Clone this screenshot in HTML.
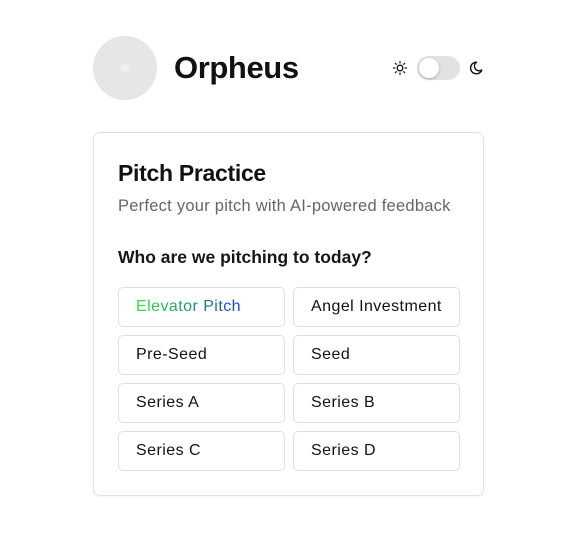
<!DOCTYPE html>
<html><head><meta charset="utf-8"><style>
*{box-sizing:border-box;margin:0;padding:0}
body{width:571px;height:552px;background:#fff;font-family:"Liberation Sans",sans-serif;color:#111;position:relative;overflow:hidden}
.av{position:absolute;left:93px;top:36px;width:64px;height:64px;border-radius:50%;background:#e6e6e6}
.av:after{content:"";position:absolute;left:30px;top:30px;width:4px;height:4px;border-radius:50%;background:#f4f4f4;box-shadow:0 0 0 3px #ededed}
.t{position:absolute;left:174px;top:48px;font-size:31px;font-weight:bold;letter-spacing:-0.4px;line-height:40px}
.tg{position:absolute;left:417px;top:56px;width:43px;height:24px;border-radius:12px;background:#e2e2e4}
.tg:after{content:"";position:absolute;left:2px;top:2px;width:20px;height:20px;border-radius:50%;background:#fff;box-shadow:0 1px 3px rgba(0,0,0,.25)}
.card{position:absolute;left:93px;top:132px;width:391px;height:364px;border:1px solid #e2e2e2;border-radius:7px;box-shadow:0 1px 2px rgba(0,0,0,.05)}
h1{position:absolute;left:118px;top:158px;font-size:23px;font-weight:bold;letter-spacing:-0.3px;line-height:30px}
.sub{position:absolute;left:118px;top:196px;font-size:16.5px;letter-spacing:0.25px;color:#666;line-height:20px}
.q{position:absolute;left:118px;top:246px;font-size:17.5px;font-weight:600;line-height:22px;color:#161616}
.b{position:absolute;width:167px;height:40px;border:1px solid #e0e0e0;border-radius:5px;font-size:16px;letter-spacing:0.45px;line-height:38px;padding-left:17px;color:#111}
.g{background:linear-gradient(90deg,#2ee640,#16a070 45%,#1a3ae8);-webkit-background-clip:text;background-clip:text;color:transparent}
</style></head><body>
<div class="av"></div>
<div class="t">Orpheus</div>
<svg style="position:absolute;left:392px;top:60px" width="16" height="16" viewBox="0 0 16 16" fill="none" stroke="#111" stroke-width="1.3" stroke-linecap="round"><circle cx="8" cy="8" r="2.8"/><path d="M8 1.5v1.3M8 13.2v1.3M1.5 8h1.3M13.2 8h1.3M3.4 3.4l.9.9M11.7 11.7l.9.9M3.4 12.6l.9-.9M11.7 4.3l.9-.9"/></svg>
<div class="tg"></div>
<svg style="position:absolute;left:468px;top:60px" width="16" height="16" viewBox="0 0 16 16" fill="none" stroke="#111" stroke-width="1.4" stroke-linejoin="round"><path d="M8.5 2.2A5.8 5.8 0 1 0 13.8 10 4.6 4.6 0 0 1 8.5 2.2z"/></svg>
<div class="card"></div>
<h1>Pitch Practice</h1>
<div class="sub">Perfect your pitch with AI-powered feedback</div>
<div class="q">Who are we pitching to today?</div>
<div class="b" style="left:118px;top:287px"><span class="g">Elevator Pitch</span></div>
<div class="b" style="left:293px;top:287px">Angel Investment</div>
<div class="b" style="left:118px;top:335px">Pre-Seed</div>
<div class="b" style="left:293px;top:335px">Seed</div>
<div class="b" style="left:118px;top:383px">Series A</div>
<div class="b" style="left:293px;top:383px">Series B</div>
<div class="b" style="left:118px;top:431px">Series C</div>
<div class="b" style="left:293px;top:431px">Series D</div>
</body></html>
